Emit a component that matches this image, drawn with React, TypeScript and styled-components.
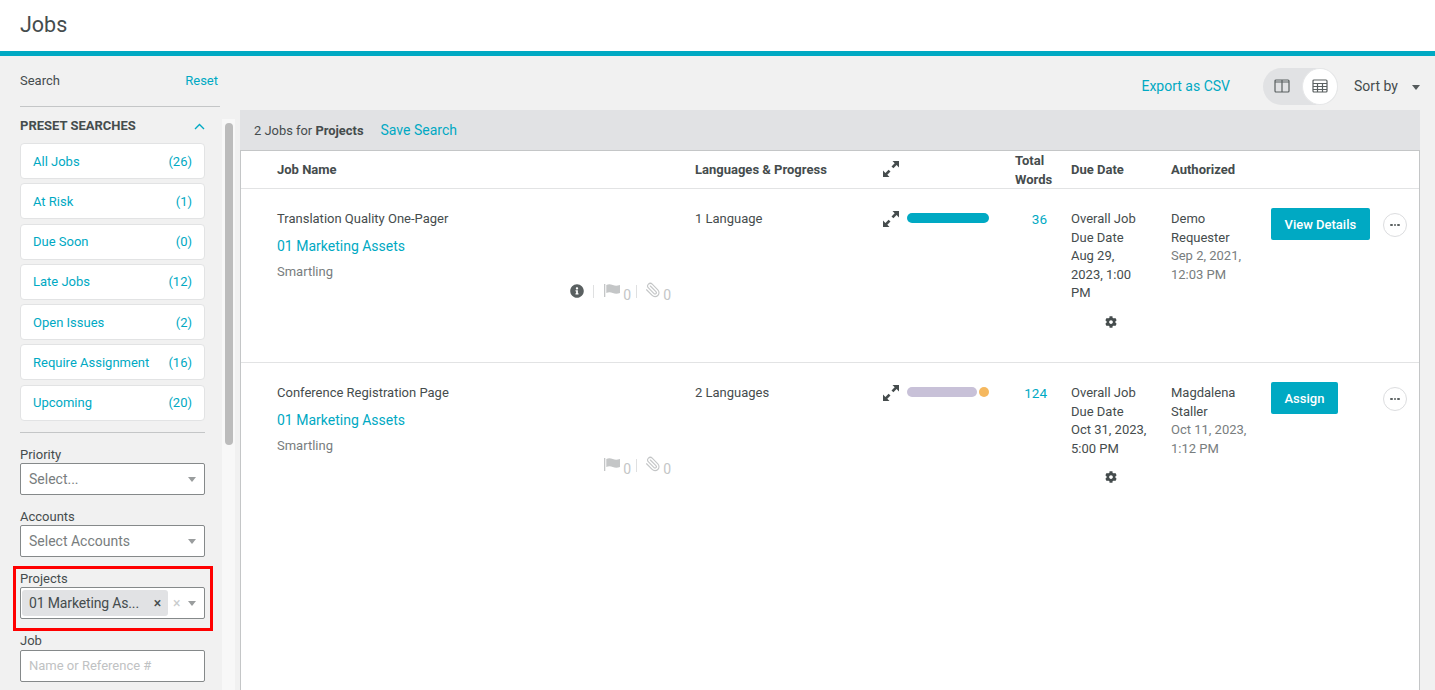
import React from "react";
import styled, { createGlobalStyle } from "styled-components";
import { FaCog, FaInfoCircle } from "react-icons/fa";
import { Paperclip } from "lucide-react";

const teal = "#00a9c3";
const ink = "#454c4d";

const Global = createGlobalStyle`
  html, body { margin: 0; padding: 0; height: 100%; overflow: hidden; }
  body { font-family: Roboto, "Liberation Sans", sans-serif; color: ${ink}; font-size: 13px; background: #f1f1f1; }
  * { box-sizing: border-box; }
`;

const Page = styled.div`
  width: 100%;
  height: 690px;
  overflow: hidden;
  display: flex;
  flex-direction: column;
`;
const Header = styled.header`
  height: 56px;
  flex: none;
  background: #fff;
  border-bottom: 5px solid ${teal};
  padding: 11px 20px 0;
`;
const Title = styled.h1`
  margin: 0;
  font-size: 21.5px;
  line-height: 28px;
  font-weight: 400;
`;
const Body = styled.div`
  flex: 1;
  display: flex;
  min-height: 0;
`;
const Sidebar = styled.aside`
  width: 240px;
  flex: none;
  padding-left: 20px;
  display: flex;
  flex-direction: column;
`;
const SearchHead = styled.div`
  width: 200px;
  height: 51px;
  padding: 16px 2px 0 0;
  line-height: 17px;
  display: flex;
  justify-content: space-between;
  border-bottom: 1px solid #c4c6c7;
  flex: none;
`;
const SearchLabel = styled.span``;
const Link = styled.a<{ $size?: number }>`
  color: ${teal};
  font-size: ${(p) => p.$size ?? 13}px;
  text-decoration: none;
`;
const SideScroll = styled.div`
  display: flex;
  flex: 1;
  min-height: 0;
`;
const Filters = styled.div`
  width: 185px;
  flex: none;
`;
const PresetHead = styled.div`
  height: 36px;
  padding-top: 11px;
  display: flex;
  justify-content: space-between;
  align-items: flex-start;
  font-size: 13px;
  font-weight: 700;
  line-height: 16px;
`;
const Chevron = styled.svg`
  width: 11px;
  height: 7px;
  margin: 5px 0 0;
  fill: none;
  stroke: ${teal};
  stroke-width: 1.4;
`;
const Preset = styled.a`
  display: flex;
  justify-content: space-between;
  align-items: center;
  height: 36px;
  margin-bottom: 4.3px;
  padding: 0 12px;
  background: #fff;
  border: 1px solid #e2e3e4;
  border-radius: 4px;
  color: ${teal};
  font-size: 13px;
`;
const Divider = styled.hr`
  margin: 11px 0 0;
  border: 0;
  border-top: 1px solid #c4c6c7;
`;
const Field = styled.div`
  position: relative;
  margin-top: 13px;
`;
const FieldLabel = styled.label<{ $h?: number }>`
  display: block;
  height: ${(p) => p.$h ?? 17}px;
  line-height: 17px;
`;
const Control = styled.div`
  height: 32px;
  background: #fff;
  border: 1px solid #85898a;
  border-radius: 2px;
  display: flex;
  align-items: center;
  padding: 0 8px;
  font-size: 14px;
  color: #787d7e;
`;
const ControlText = styled.span`
  flex: 1;
`;
const Caret = styled.span<{ $dark?: boolean }>`
  width: 0;
  height: 0;
  flex: none;
  margin-top: 2px;
  border-left: 4.5px solid transparent;
  border-right: 4.5px solid transparent;
  border-top: 5px solid ${(p) => (p.$dark ? "#555b5c" : "#9a9d9e")};
`;
const Chip = styled.span`
  width: 146px;
  height: 26px;
  margin-left: -7px;
  padding: 0 7px 0 7px;
  display: flex;
  align-items: center;
  justify-content: space-between;
  background: #e1e2e4;
  border-radius: 3px;
  color: ${ink};
  font-size: 14px;
  letter-spacing: -0.15px;
`;
const ChipX = styled.span`
  font-size: 14px;
  font-weight: 500;
  line-height: 1;
`;
const ClearX = styled.span`
  margin-left: 5px;
  flex: 1;
  font-size: 14px;
  color: #c9cccd;
`;
const Placeholder = styled.span`
  color: #bfc2c3;
  font-size: 13px;
`;
const Highlight = styled.div`
  position: absolute;
  left: -7px;
  top: -4px;
  width: 200px;
  height: 65px;
  border: 3px solid #f00;
  pointer-events: none;
`;
const Track = styled.div`
  margin: 12px 0 0 17px;
  width: 13px;
  background: #f8f8f8;
  padding: 4px 2px 0 3px;
  flex: none;
`;
const Thumb = styled.div`
  height: 322px;
  background: #bcbcbc;
  border-radius: 4px;
`;
const Main = styled.main`
  flex: 1;
  min-width: 0;
  padding-right: 15px;
  display: flex;
  flex-direction: column;
`;
const Toolbar = styled.div`
  height: 54px;
  flex: none;
  display: flex;
  justify-content: flex-end;
  align-items: center;
  padding-top: 6px;
  margin-right: -2px;
`;
const Toggle = styled.div`
  width: 75px;
  height: 37px;
  margin: 0 16px 0 33px;
  border-radius: 19px;
  background: #e1e2e4;
  display: flex;
  align-items: center;
  justify-content: space-between;
  padding-left: 11px;
`;
const ToggleOn = styled.div`
  width: 36px;
  height: 37px;
  border-radius: 50%;
  background: #fff;
  border: 1px solid #e6e7e8;
  display: flex;
  align-items: center;
  justify-content: center;
`;
const ViewIcon = styled.svg`
  width: 16px;
  height: 14px;
  fill: none;
  stroke: #5a6061;
  stroke-width: 1.2;
`;
const SortBy = styled.div`
  display: flex;
  align-items: center;
  gap: 14px;
  width: 68px;
  font-size: 14px;
  white-space: nowrap;
`;
const PanelBar = styled.div`
  height: 40px;
  flex: none;
  background: #e1e2e4;
  padding-left: 14px;
  display: flex;
  align-items: center;
  gap: 17px;
  font-size: 12.9px;
`;
const PanelCount = styled.span`
  b { font-weight: 700; }
`;
const Table = styled.div`
  flex: 1;
  background: #fff;
  border: 1px solid #c4c6c7;
  border-bottom: 0;
`;
const Row = styled.div<{ $head?: boolean; $h?: number }>`
  display: grid;
  grid-template-columns: 418px 188px 132px 56px 100px 100px 112px 1fr;
  padding-left: 36px;
  height: ${(p) => p.$h ?? 0}px;
  border-bottom: 1px solid #e2e3e4;
  ${(p) =>
    p.$head
      ? "align-items: start; font-weight: 700; line-height: 19px;"
      : "padding-top: 21px; line-height: 18.5px;"}
`;
const LastRow = styled(Row)`
  border-bottom: 0;
  height: auto;
`;
const HeadCell = styled.span<{ $top?: number }>`
  padding-top: ${(p) => p.$top ?? 8.5}px;
`;
const NameCell = styled.div`
  display: flex;
  flex-direction: column;
  padding-right: 24px;
`;
const JobLink = styled(Link)`
  margin-top: 7.5px;
  line-height: 20px;
`;
const Org = styled.span`
  margin-top: 7px;
  color: #787d7e;
`;
const Meta = styled.div`
  align-self: flex-end;
  margin-top: 2px;
  display: flex;
  align-items: flex-start;
  color: #c4c6c7;
  height: 18px;
`;
const InfoIcon = styled(FaInfoCircle)`
  width: 14px;
  height: 14px;
  color: #5a6061;
`;
const Sep = styled.span`
  width: 1px;
  height: 13px;
  background: #dfe0e1;
  margin: 1px 10px 0 9px;
`;
const MetaSep = styled(Sep)`
  margin: 1px 9px 0 5px;
`;
const FlagIcon = styled.svg`
  width: 16px;
  height: 13px;
  fill: #c4c6c7;
`;
const ClipIcon = styled(Paperclip)`
  width: 16px;
  height: 16px;
  margin: -2px -2px 0 -1px;
  transform: scaleX(-1);
  stroke-width: 1.7;
  color: #c4c6c7;
`;
const Count = styled.span`
  margin: 3px 0 0 3px;
  font-size: 14px;
  line-height: 16px;
`;
const ClipCount = styled(Count)`
  margin-left: 4px;
`;
const ProgressCell = styled.div`
  display: flex;
  align-items: center;
  gap: 8px;
  height: 18px;
`;
const ExpandIcon = styled.svg`
  width: 16px;
  height: 16px;
  fill: ${ink};
  flex: none;
  display: block;
`;
const Bar = styled.div<{ $w: number; $c: string }>`
  width: ${(p) => p.$w}px;
  height: 10px;
  border-radius: 5px;
  background: ${(p) => p.$c};
  margin-top: -2px;
`;
const Dot = styled.div`
  width: 10px;
  height: 10px;
  border-radius: 50%;
  background: #f5b85f;
  margin: -2px 0 0 -6px;
`;
const Words = styled(Link)`
  text-align: right;
  padding-right: 24px;
  font-size: 13.5px;
`;
const DueCell = styled.div`
  padding-right: 20px;
  display: flex;
  flex-direction: column;
`;
const Gear = styled(FaCog)`
  width: 12px;
  height: 12px;
  color: ${ink};
  align-self: center;
  margin: 13px 0 0 0;
`;
const Muted = styled.div`
  color: #787d7e;
`;
const ActionButton = styled.button`
  height: 32px;
  padding: 0 13.5px;
  border: 0;
  border-radius: 2px;
  background: ${teal};
  color: #fff;
  font: 500 13px Roboto, "Liberation Sans", sans-serif;
  margin-top: -2px;
  justify-self: start;
`;
const More = styled.div`
  width: 24px;
  height: 24px;
  margin-top: 3px;
  border: 1px solid #dcdddf;
  border-radius: 50%;
  display: flex;
  align-items: center;
  justify-content: center;
  gap: 1px;
`;
const MoreDot = styled.i`
  width: 2.5px;
  height: 2.5px;
  border-radius: 50%;
  background: #5a6061;
`;

const presets: [string, number][] = [
  ["All Jobs", 26],
  ["At Risk", 1],
  ["Due Soon", 0],
  ["Late Jobs", 12],
  ["Open Issues", 2],
  ["Require Assignment", 16],
  ["Upcoming", 20],
];

const Flag = () => (
  <FlagIcon viewBox="0 0 16 13">
    <path d="M0 0h1.300v13H0zM2.300 1c2-1 4-1 6.500 0s4 1 7.200 0v8c-2.500 1-5 1-7.200 0s-4.500-1-6.500 0z" />
  </FlagIcon>
);

const Expand = () => (
  <ExpandIcon viewBox="0 0 16 16">
    <path d="M9.500 0H16v6.500l-2.400-2.400-3.200 3.200-1.900-1.900 3.200-3.200zM6.500 16H0V9.500l2.400 2.400 3.200-3.200 1.900 1.900-3.200 3.200z" />
  </ExpandIcon>
);

const MoreButton = () => (
  <More>
    <MoreDot />
    <MoreDot />
    <MoreDot />
  </More>
);

export default function App() {
  return (
    <Page>
      <Global />
      <Header>
        <Title>Jobs</Title>
      </Header>
      <Body>
        <Sidebar>
          <SearchHead>
            <SearchLabel>Search</SearchLabel>
            <Link>Reset</Link>
          </SearchHead>
          <SideScroll>
            <Filters>
              <PresetHead>
                PRESET SEARCHES
                <Chevron viewBox="0 0 11 7">
                  <path d="M1 6l4.500-4.500L10 6" />
                </Chevron>
              </PresetHead>
              {presets.map(([label, n]) => (
                <Preset key={label}>
                  <span>{label}</span>
                  <span>({n})</span>
                </Preset>
              ))}
              <Divider />
              <Field>
                <FieldLabel>Priority</FieldLabel>
                <Control>
                  <ControlText>Select...</ControlText>
                  <Caret />
                </Control>
              </Field>
              <Field>
                <FieldLabel>Accounts</FieldLabel>
                <Control>
                  <ControlText>Select Accounts</ControlText>
                  <Caret />
                </Control>
              </Field>
              <Field>
                <FieldLabel>Projects</FieldLabel>
                <Control>
                  <Chip>
                    01 Marketing As...
                    <ChipX>×</ChipX>
                  </Chip>
                  <ClearX>×</ClearX>
                  <Caret />
                </Control>
                <Highlight />
              </Field>
              <Field>
                <FieldLabel $h={18}>Job</FieldLabel>
                <Control>
                  <Placeholder>Name or Reference #</Placeholder>
                </Control>
              </Field>
            </Filters>
            <Track>
              <Thumb />
            </Track>
          </SideScroll>
        </Sidebar>
        <Main>
          <Toolbar>
            <Link $size={14}>Export as CSV</Link>
            <Toggle>
              <ViewIcon viewBox="0 0 16 14">
                <rect x="1" y="1" width="14" height="12" rx="1" />
                <path d="M8 1v12M1 3h14" />
              </ViewIcon>
              <ToggleOn>
                <ViewIcon viewBox="0 0 16 14">
                  <rect x="1" y="1" width="14" height="12" rx="1" />
                  <path d="M1 4.500h14M1 7.500h14M1 10.500h14M5.500 4.500v8.500M10.500 4.500v8.500" />
                </ViewIcon>
              </ToggleOn>
            </Toggle>
            <SortBy>
              Sort by
              <Caret $dark />
            </SortBy>
          </Toolbar>
          <PanelBar>
            <PanelCount>
              2 Jobs for <b>Projects</b>
            </PanelCount>
            <Link $size={14}>Save Search</Link>
          </PanelBar>
          <Table>
            <Row $head $h={38}>
              <HeadCell>Job Name</HeadCell>
              <HeadCell>Languages &amp; Progress</HeadCell>
              <HeadCell $top={10}>
                <Expand />
              </HeadCell>
              <HeadCell $top={0}>
                Total
                <br />
                Words
              </HeadCell>
              <HeadCell>Due Date</HeadCell>
              <HeadCell>Authorized</HeadCell>
            </Row>
            <Row $h={174}>
              <NameCell>
                <span>Translation Quality One-Pager</span>
                <JobLink $size={14}>01 Marketing Assets</JobLink>
                <Org>Smartling</Org>
                <Meta>
                  <InfoIcon />
                  <Sep />
                  <Flag />
                  <Count>0</Count>
                  <MetaSep />
                  <ClipIcon />
                  <ClipCount>0</ClipCount>
                </Meta>
              </NameCell>
              <span>1 Language</span>
              <ProgressCell>
                <Expand />
                <Bar $w={82} $c={teal} />
              </ProgressCell>
              <Words>36</Words>
              <DueCell>
                <span>
                  Overall Job
                  <br />
                  Due Date
                  <br />
                  Aug 29,
                  <br />
                  2023, 1:00
                  <br />
                  PM
                </span>
                <Gear />
              </DueCell>
              <div>
                Demo
                <br />
                Requester
                <Muted>
                  Sep 2, 2021,
                  <br />
                  12:03 PM
                </Muted>
              </div>
              <ActionButton>View Details</ActionButton>
              <MoreButton />
            </Row>
            <LastRow>
              <NameCell>
                <span>Conference Registration Page</span>
                <JobLink $size={14}>01 Marketing Assets</JobLink>
                <Org>Smartling</Org>
                <Meta>
                  <Flag />
                  <Count>0</Count>
                  <MetaSep />
                  <ClipIcon />
                  <ClipCount>0</ClipCount>
                </Meta>
              </NameCell>
              <span>2 Languages</span>
              <ProgressCell>
                <Expand />
                <Bar $w={70} $c="#c8c1d8" />
                <Dot />
              </ProgressCell>
              <Words>124</Words>
              <DueCell>
                <span>
                  Overall Job
                  <br />
                  Due Date
                  <br />
                  Oct 31, 2023,
                  <br />
                  5:00 PM
                </span>
                <Gear />
              </DueCell>
              <div>
                Magdalena
                <br />
                Staller
                <Muted>
                  Oct 11, 2023,
                  <br />
                  1:12 PM
                </Muted>
              </div>
              <ActionButton>Assign</ActionButton>
              <MoreButton />
            </LastRow>
          </Table>
        </Main>
      </Body>
    </Page>
  );
}
